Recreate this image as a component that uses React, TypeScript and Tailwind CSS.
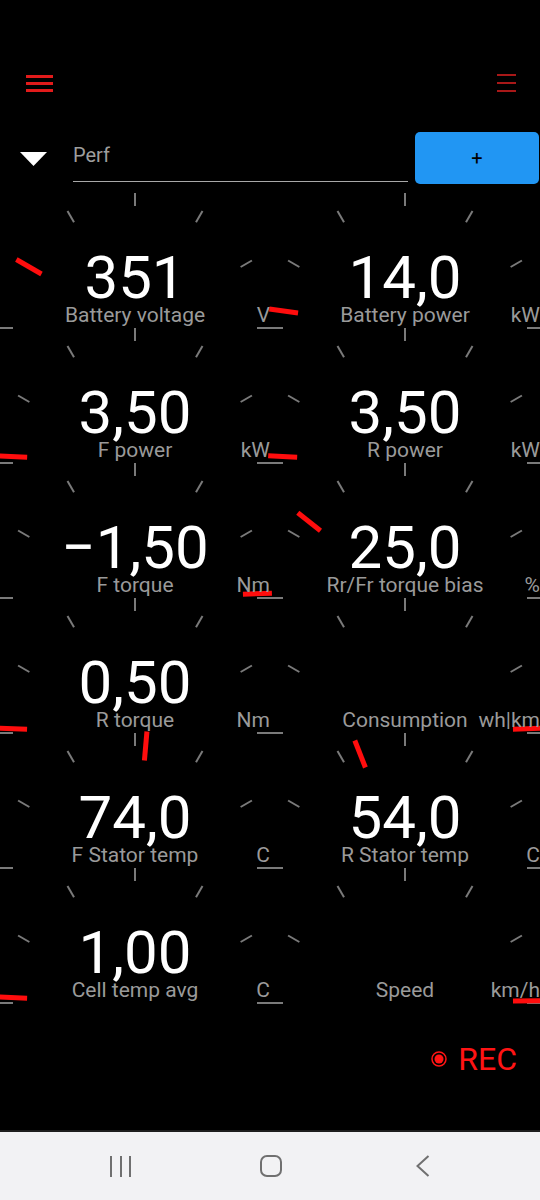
import React from 'react'

type GaugeData = {
  value: string
  label: string
  unit: string
  needle: number
}

const GAUGES: GaugeData[] = [
  { value: '351', label: 'Battery voltage', unit: 'V', needle: -60 },
  { value: '14,0', label: 'Battery power', unit: 'kW', needle: -82 },
  { value: '3,50', label: 'F power', unit: 'kW', needle: -87 },
  { value: '3,50', label: 'R power', unit: 'kW', needle: -87 },
  { value: '\u22121,50', label: 'F torque', unit: 'Nm', needle: 88 },
  { value: '25,0', label: 'Rr/Fr torque bias', unit: '%', needle: -51.5 },
  { value: '0,50', label: 'R torque', unit: 'Nm', needle: -88 },
  { value: '', label: 'Consumption', unit: 'wh|km', needle: 88 },
  { value: '74,0', label: 'F Stator temp', unit: 'C', needle: 5 },
  { value: '54,0', label: 'R Stator temp', unit: 'C', needle: -21.5 },
  { value: '1,00', label: 'Cell temp avg', unit: 'C', needle: -87.5 },
  { value: '', label: 'Speed', unit: 'km/h', needle: 89 },
]

const TICKS = [-90, -60, -30, 0, 30, 60, 90]

// point on the dial, angle in degrees from straight up
const polar = (a: number, r: number) => {
  const rad = (a * Math.PI) / 180
  return { x: 135 + r * Math.sin(rad), y: 135 - r * Math.cos(rad) }
}

function Gauge({ value, label, unit, needle }: GaugeData) {
  const n1 = polar(needle, 108)
  const n2 = polar(needle, 137)
  return (
    <div className="relative h-[135px]">
      <svg
        className="absolute left-0 top-0 overflow-visible"
        width={270}
        height={135}
        viewBox="0 0 270 135"
      >
        {TICKS.map((a) => {
          const p1 = polar(a, 122)
          const p2 = polar(a, 135)
          return (
            <line key={a} x1={p1.x} y1={p1.y} x2={p2.x} y2={p2.y} stroke="#7a7a7a" strokeWidth={2} />
          )
        })}
        <line x1={n1.x} y1={n1.y} x2={n2.x} y2={n2.y} stroke="#ff0d0d" strokeWidth={5} />
      </svg>

      <div className="relative flex flex-col">
        <div className="mt-[58.5px] h-[52px] text-center text-[60px] leading-[52px] text-white">
          {value}
        </div>
        <div className="grid h-[23px] grid-cols-[1fr_auto_1fr] text-[21px] leading-[22px] text-[#9a9a9a]">
          <span />
          <span className="whitespace-nowrap">{label}</span>
          <span className="whitespace-nowrap text-right">{unit}</span>
        </div>
      </div>
    </div>
  )
}

function App() {
  return (
    <div className="flex h-[1200px] w-[540px] flex-col overflow-hidden bg-black font-['Roboto',sans-serif]">
      {/* status bar area */}
      <div className="h-[50px]" />

      {/* Top bar with menus */}
      <div className="flex h-[66px] items-center justify-between pl-[26px] pr-[24px]">
        <div className="flex w-[27px] flex-col gap-[4px]">
          <span className="h-[3px] bg-[#e21b1b]" />
          <span className="h-[3px] bg-[#e21b1b]" />
          <span className="h-[3px] bg-[#e21b1b]" />
        </div>
        <div className="flex w-[19px] flex-col gap-[6px]">
          <span className="h-[2px] bg-[#a81818]" />
          <span className="h-[2px] bg-[#a81818]" />
          <span className="h-[2px] bg-[#a81818]" />
        </div>
      </div>

      {/* Layout picker */}
      <div className="mt-[16px] flex h-[52px] items-start pl-[20px]">
        <svg className="mt-[20px]" width={27} height={14} viewBox="0 0 27 14">
          <polygon points="0,0 27,0 13.5,14" fill="#ffffff" />
        </svg>
        <div className="ml-[26px] h-[50px] w-[335px] border-b-[1.5px] border-[#a8a8a8] pt-[11px] text-[20px] leading-[24px] text-[#9e9e9e]">
          Perf
        </div>
        <button className="ml-[7px] flex h-[52px] w-[124px] items-center justify-center rounded-[5px] bg-[#2196f3] text-[20px] text-black">
          +
        </button>
      </div>

      {/* Gauges */}
      <div className="mt-[9px] grid grid-cols-2">
        {GAUGES.map((g, i) => (
          <Gauge key={i} {...g} />
        ))}
      </div>

      {/* Recording indicator */}
      <div className="mt-[38px] flex h-[36px] items-center justify-end gap-[11px] pr-[23px]">
        <svg width={16} height={16} viewBox="0 0 16 16">
          <circle cx={8} cy={8} r={7} fill="none" stroke="#ff1414" strokeWidth={1.5} />
          <circle cx={8} cy={8} r={4.5} fill="#ff1414" />
        </svg>
        <span className="text-[32px] leading-[36px] text-[#ff1414]">REC</span>
      </div>

      <div className="flex-1" />

      {/* Android navigation bar */}
      <div className="flex h-[70px] items-center border-t-[2px] border-[#1e1e1e] bg-[#f2f2f4] pl-[110px]">
        <div className="flex h-[21px] w-[21px] justify-between">
          <span className="w-[2px] bg-[#707070]" />
          <span className="w-[2px] bg-[#707070]" />
          <span className="w-[2px] bg-[#707070]" />
        </div>
        <div className="ml-[129px] h-[22px] w-[22px] rounded-[7px] border-[2px] border-[#707070]" />
        <svg className="ml-[134px]" width={14} height={22} viewBox="0 0 14 22">
          <polyline points="12.5,1 1.5,11 12.5,21" fill="none" stroke="#707070" strokeWidth={2} />
        </svg>
      </div>
    </div>
  )
}

export default App
